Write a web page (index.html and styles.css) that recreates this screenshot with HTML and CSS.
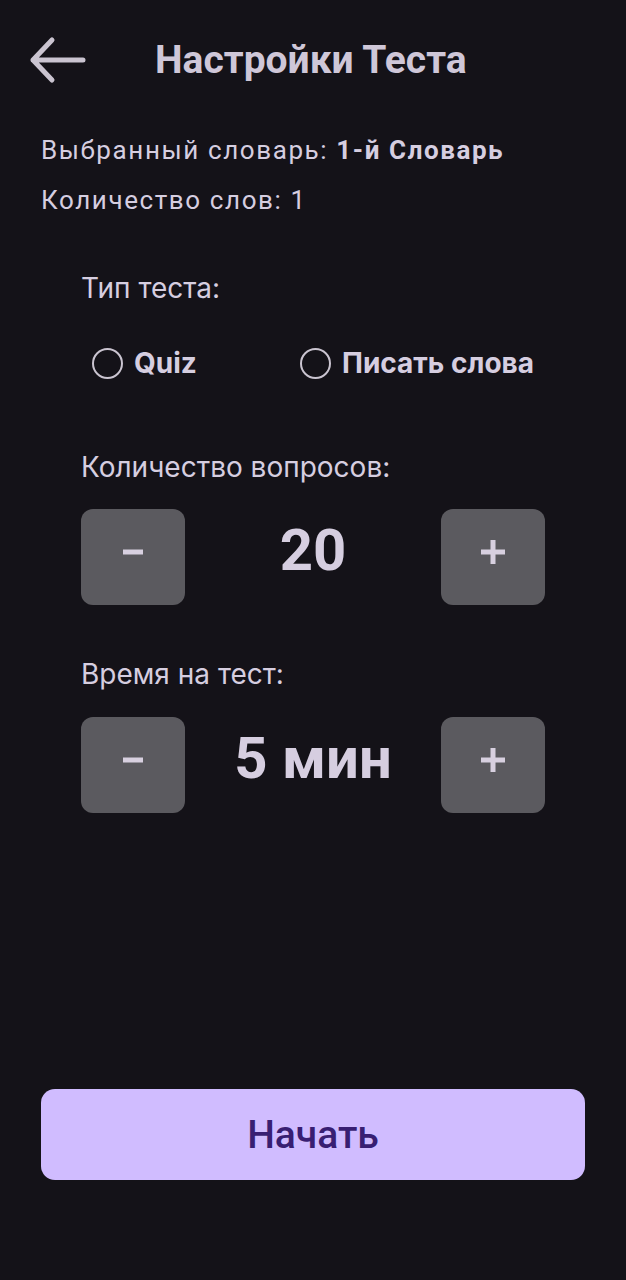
FILE: index.html
```html
<!DOCTYPE html>
<html lang="ru">
<head>
<meta charset="utf-8">
<title>Настройки Теста</title>
<link rel="stylesheet" href="styles.css">
</head>
<body>
<div class="page">
  <header class="header">
    <svg class="back" width="60" height="50" viewBox="0 0 60 50" aria-label="Назад">
      <path d="M5 25 H55 M5 25 L24 5 M5 25 L24 45" fill="none" stroke="#cac4d0" stroke-width="5" stroke-linecap="round" stroke-linejoin="round"/>
    </svg>
    <h1 class="title">Настройки Теста</h1>
  </header>

  <section class="info">
    <p class="info-line">Выбранный словарь: <b>1-й Словарь</b></p>
    <p class="info-line">Количество слов: 1</p>
  </section>

  <section class="settings">
    <p class="label label-type">Тип теста:</p>
    <div class="radios">
      <label class="radio radio-first"><span class="circle"></span><span class="radio-text">Quiz</span></label>
      <label class="radio"><span class="circle"></span><span class="radio-text">Писать слова</span></label>
    </div>

    <p class="label label-count">Количество вопросов:</p>
    <div class="stepper">
      <button class="step-btn" aria-label="минус"><svg width="24" height="24" viewBox="0 0 24 24"><rect x="2" y="9.5" width="20" height="5" fill="#d8d0e0"/></svg></button>
      <span class="value">20</span>
      <button class="step-btn" aria-label="плюс"><svg width="24" height="24" viewBox="0 0 24 24"><rect x="0" y="9.5" width="24" height="5" fill="#d8d0e0"/><rect x="9.5" y="0" width="5" height="24" fill="#d8d0e0"/></svg></button>
    </div>

    <p class="label label-time">Время на тест:</p>
    <div class="stepper stepper-time">
      <button class="step-btn" aria-label="минус"><svg width="24" height="24" viewBox="0 0 24 24"><rect x="2" y="9.5" width="20" height="5" fill="#d8d0e0"/></svg></button>
      <span class="value">5 мин</span>
      <button class="step-btn" aria-label="плюс"><svg width="24" height="24" viewBox="0 0 24 24"><rect x="0" y="9.5" width="24" height="5" fill="#d8d0e0"/><rect x="9.5" y="0" width="5" height="24" fill="#d8d0e0"/></svg></button>
    </div>
  </section>

  <button class="start">Начать</button>
</div>
</body>
</html>
```

FILE: styles.css
```css
html, body {
  margin: 0;
  padding: 0;
  background: #141218;
}
body {
  font-family: Roboto, "Noto Sans", sans-serif;
  color: #d6cee0;
}
.page {
  width: 626px;
  height: 1280px;
  box-sizing: border-box;
  display: flex;
  flex-direction: column;
}
.header {
  display: flex;
  align-items: center;
  height: 50px;
  margin-top: 35px;
  padding-left: 28px;
}
.back {
  display: block;
  flex: none;
}
.title {
  margin: 0 0 0 67px;
  font-size: 39px;
  font-weight: 700;
  line-height: 50px;
  color: #cfc7d8;
}
.info {
  margin-top: 40px;
  padding-left: 41px;
}
.info-line {
  margin: 0;
  font-size: 26px;
  letter-spacing: 1.6px;
  line-height: 50px;
}
.info-line b {
  font-weight: 700;
}
.settings {
  padding-left: 81px;
  padding-right: 81px;
}
.label {
  margin: 0;
  font-family: Inter, Roboto, sans-serif;
  font-size: 28px;
  line-height: 34px;
}
.label-type { margin-top: 46px; }
.label-count { margin-top: 67px; }
.label-time { margin-top: 52px; }
.radios {
  display: flex;
  align-items: center;
  height: 40px;
  margin-top: 38px;
  padding-left: 11px;
}
.radio {
  display: flex;
  align-items: center;
  gap: 11px;
}
.radio-first {
  width: 208px;
}
.circle {
  width: 31px;
  height: 31px;
  box-sizing: border-box;
  border: 2.5px solid #cac4d0;
  border-radius: 50%;
  flex: none;
}
.radio-text {
  font-family: Inter, Roboto, sans-serif;
  font-size: 28px;
  font-weight: 700;
  color: #d6cee0;
}
.stepper {
  display: flex;
  align-items: center;
  margin-top: 25px;
}
.stepper-time {
  margin-top: 26px;
}
.step-btn {
  width: 104px;
  height: 96px;
  border: none;
  border-radius: 12px;
  background: #5b5a5f;
  padding: 0 0 10px 0;
  display: flex;
  align-items: center;
  justify-content: center;
  flex: none;
}
.step-btn svg {
  display: block;
}
.value {
  flex: 1;
  text-align: center;
  font-size: 58px;
  font-weight: 700;
  padding-bottom: 14px;
  color: #d6cee0;
}
.start {
  margin: auto 41px 100px 41px;
  height: 91px;
  border: none;
  border-radius: 14px;
  background: #d0bcff;
  color: #381e72;
  font-family: Roboto, "Noto Sans", sans-serif;
  font-size: 39px;
  font-weight: 500;
}
```
